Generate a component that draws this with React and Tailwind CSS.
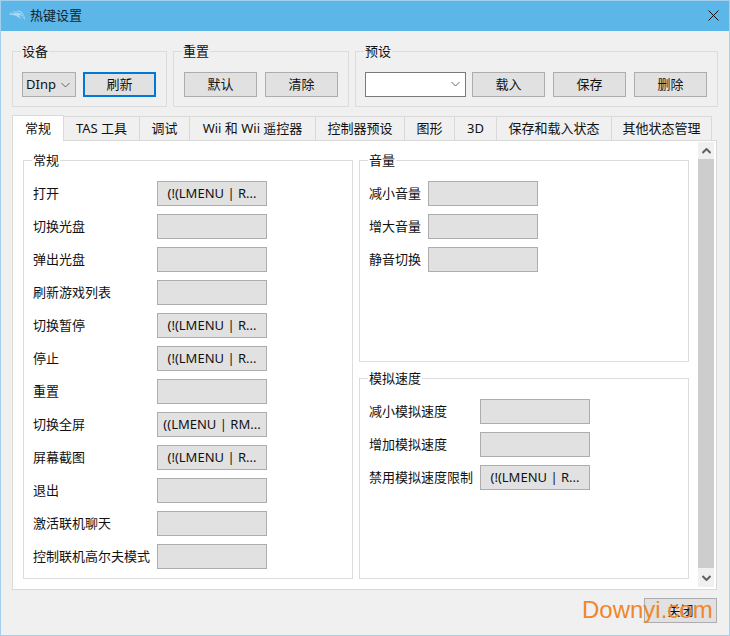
import React from 'react';

const font = { fontFamily: '"Noto Sans", "Noto Sans CJK SC", sans-serif' };

const leftRows = [
    ['打开', '(!(LMENU | R...'],
    ['切换光盘', ''],
    ['弹出光盘', ''],
    ['刷新游戏列表', ''],
    ['切换暂停', '(!(LMENU | R...'],
    ['停止', '(!(LMENU | R...'],
    ['重置', ''],
    ['切换全屏', '((LMENU | RM...'],
    ['屏幕截图', '(!(LMENU | R...'],
    ['退出', ''],
    ['激活联机聊天', ''],
    ['控制联机高尔夫模式', ''],
];
const volumeRows = [['减小音量', ''], ['增大音量', ''], ['静音切换', '']];
const speedRows = [['减小模拟速度', ''], ['增加模拟速度', ''], ['禁用模拟速度限制', '(!(LMENU | R...']];
const tabs = [
    ['TAS 工具', 'w-[76px]'],
    ['调试', 'w-[50px]'],
    ['Wii 和 Wii 遥控器', 'w-[126px]'],
    ['控制器预设', 'w-[89px]'],
    ['图形', 'w-[50px]'],
    ['3D', 'w-[42px]'],
    ['保存和载入状态', 'w-[115px]'],
    ['其他状态管理', 'w-[100px]'],
];

const Chevron = ({ up, className }) => (
    <svg width="9" height="6" viewBox="0 0 9 6" fill="none" stroke="currentColor" className={className}>
        <path d={up ? 'M0.5 5L4.5 1L8.5 5' : 'M0.5 1L4.5 5L8.5 1'} />
    </svg>
);

const Btn = ({ children, className = 'w-[73px]' }) => (
    <button className={`h-[25px] pt-px shrink-0 border border-[#adadad] bg-[#e1e1e1] text-[13px] text-[#111] ${className}`}>
        {children}
    </button>
);

const Group = ({ title, className, children }) => (
    <div className={`relative border border-[#dcdcdc] ${className}`}>
        <span className="absolute left-[8px] top-[-10px] px-px bg-inherit text-[13px] leading-[18px] text-[#111]">{title}</span>
        {children}
    </div>
);

const HotkeyRows = ({ rows, btnWidth }) => (
    <div className="flex flex-col gap-2 pt-5 pl-[9px]">
        {rows.map(([label, value]) => (
            <div key={label} className="flex items-center justify-between w-fit">
                <span className={`text-[13px] text-[#111] whitespace-nowrap ${btnWidth}`}>{label}</span>
                <button className="w-[110px] h-[25px] border border-[#adadad] bg-[#e1e1e1] text-[13px] text-[#111] whitespace-nowrap overflow-hidden">
                    {value}
                </button>
            </div>
        ))}
    </div>
);

const App = () => {
    return (
        <div style={font} className="relative w-[730px] h-[636px] border border-[#a3d0ec] bg-[#f0f0f0] flex flex-col overflow-hidden">
            {/* title bar */}
            <div className="h-[30px] shrink-0 bg-[#5cb6e8] flex items-center pl-[8px] pr-[10px] pb-px">
                <svg width="17" height="11" viewBox="0 0 17 11" fill="none" className="mr-[4px]">
                    <path d="M0 4C3 1 8 0 11 1C14 2 16 6 16 10C14 7 12 5 10 5L12 9C9 7 6 5 3 5C2 5 1 5 0 4Z" fill="#a4d9f5" />
                    <path d="M2 3.500C5 2 8 1.500 10.500 2.500C12.500 3.300 13.800 5 14.500 7" stroke="#4aa3d8" strokeWidth="0.8" />
                </svg>
                <span className="text-[13px] text-[#10222e]">热键设置</span>
                <svg width="11" height="11" viewBox="0 0 11 11" stroke="#111" className="ml-auto">
                    <path d="M0.500 0.500L10.500 10.500M10.500 0.500L0.500 10.500" />
                </svg>
            </div>

            <div className="flex-1 pl-[11px] pt-5">
                {/* device, reset, presets */}
                <div className="flex gap-[6px] h-[56px]">
                    <Group title="设备" className="w-[155px] bg-[#f0f0f0] flex items-center gap-[7px] pl-[9px] pt-[10px]">
                        <div className="w-[54px] h-[25px] pt-px border border-[#adadad] bg-[#e1e1e1] flex items-center justify-between pl-[3px] pr-[5px] text-[13px] text-[#111]">
                            DInp
                            <Chevron className="text-[#666]" />
                        </div>
                        <button className="w-[73px] h-[25px] pt-px border-2 border-[#0078d7] bg-[#e1e1e1] text-[13px] text-[#111]">刷新</button>
                    </Group>
                    <Group title="重置" className="w-[176px] bg-[#f0f0f0] flex items-center gap-2 pl-[10px] pt-[10px]">
                        <Btn>默认</Btn>
                        <Btn>清除</Btn>
                    </Group>
                    <Group title="预设" className="w-[363px] bg-[#f0f0f0] flex items-center pl-[9px] pt-[10px]">
                        <div className="w-[101px] h-[25px] mr-[6px] border border-[#7a7a7a] bg-white flex items-center justify-end pr-[5px]">
                            <Chevron className="text-[#666]" />
                        </div>
                        <Btn className="w-[73px] mr-2">载入</Btn>
                        <Btn className="w-[73px] mr-2">保存</Btn>
                        <Btn>删除</Btn>
                    </Group>
                </div>

                {/* tabs */}
                <div className="flex items-end h-[26px] mt-[7px]">
                    <div className="relative z-10 w-[52px] h-[26px] -mb-px pt-px border border-b-0 border-[#d9d9d9] bg-white flex items-center justify-center text-[13px] text-[#111]">常规</div>
                    {tabs.map(([name, width]) => (
                        <div key={name} className={`${width} h-[24px] pt-px border border-l-0 border-b-0 border-[#d9d9d9] bg-[#f0f0f0] flex items-center justify-center text-[13px] text-[#111] whitespace-nowrap`}>
                            {name}
                        </div>
                    ))}
                </div>

                {/* tab pane */}
                <div className="w-[705px] h-[450px] border border-[#d9d9d9] bg-white flex pl-[10px] pt-[19px]">
                    <Group title="常规" className="w-[330px] h-[419px] bg-white">
                        <HotkeyRows rows={leftRows} btnWidth="w-[124px]" />
                    </Group>
                    <div className="w-[330px] ml-[6px] flex flex-col">
                        <Group title="音量" className="h-[202px] bg-white">
                            <HotkeyRows rows={volumeRows} btnWidth="w-[59px]" />
                        </Group>
                        <Group title="模拟速度" className="h-[201px] mt-4 bg-white">
                            <HotkeyRows rows={speedRows} btnWidth="w-[111px]" />
                        </Group>
                    </div>
                    {/* scrollbar */}
                    <div className="w-[16px] h-[445px] ml-[9px] mt-[-18px] bg-[#f0f0f0] flex flex-col">
                        <div className="h-[17px] flex items-center justify-center text-[#606060]">
                            <Chevron up className="stroke-2" />
                        </div>
                        <div className="h-[409px] bg-[#cdcdcd]" />
                        <div className="h-[19px] flex items-center justify-center text-[#606060]">
                            <Chevron className="stroke-2" />
                        </div>
                    </div>
                </div>

                <div className="flex justify-end w-[705px] mt-2">
                    <Btn>关闭</Btn>
                </div>
            </div>

            {/* watermark */}
            <span className="absolute left-[581px] top-[593px] text-[24px] leading-[32px] text-[#f0862c] font-['Liberation_Sans',sans-serif] pointer-events-none">
                Downyi.com
            </span>
        </div>
    );
};

export default App;
